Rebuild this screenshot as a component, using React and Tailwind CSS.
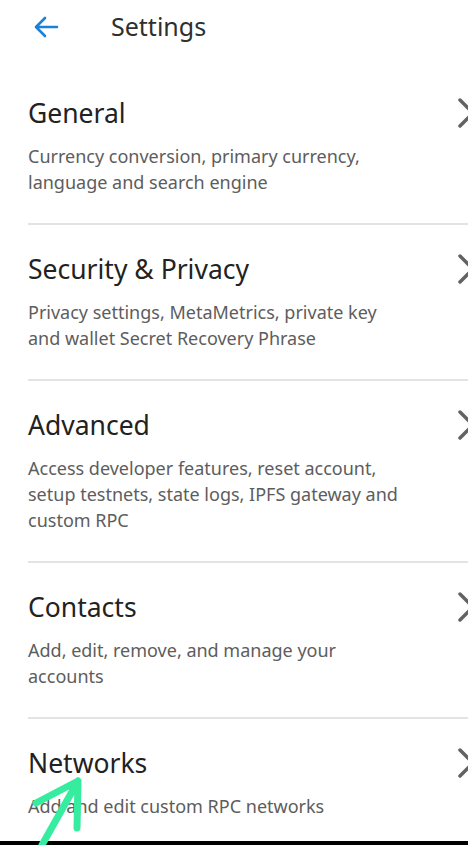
import React from 'react';

const items = [
  { title: 'General', desc: ['Currency conversion, primary currency,', 'language and search engine'] },
  { title: 'Security & Privacy', desc: ['Privacy settings, MetaMetrics, private key', 'and wallet Secret Recovery Phrase'] },
  { title: 'Advanced', desc: ['Access developer features, reset account,', 'setup testnets, state logs, IPFS gateway and', 'custom RPC'] },
  { title: 'Contacts', desc: ['Add, edit, remove, and manage your', 'accounts'] },
  { title: 'Networks', desc: ['Add and edit custom RPC networks'] },
];

function Chevron() {
  return (
    <svg width="20" height="32" viewBox="0 0 20 32" className="shrink-0">
      <path d="M4 3 L17 16 L4 29" fill="none" stroke="#5f6368" strokeWidth="3.5" strokeLinecap="round" strokeLinejoin="round" />
    </svg>
  );
}

export default function App() {
  return (
    <div className="relative w-[468px] h-[845px] overflow-hidden bg-white" style={{ fontFamily: '"Noto Sans", Lato, sans-serif' }}>
      <div className="flex items-center h-[54px] pl-[32px]">
        <svg width="28" height="24" viewBox="0 0 28 24">
          <path d="M25 12 H4 M13 3 L4 12 L13 21" fill="none" stroke="#1a82d6" strokeWidth="2.6" strokeLinecap="round" strokeLinejoin="round" />
        </svg>
        <span className="ml-[51px] text-[25px] text-[#2f2f2f]">Settings</span>
      </div>

      <div className="pl-[28px]">
        {items.map((it, i) => (
          <div key={it.title} className={i > 0 ? 'border-t-2 border-[#e3e3e3]' : ''}>
            <div className={`flex items-start justify-between mr-[-8px] ${i === 0 ? 'pt-[42px]' : 'pt-[27px]'} pb-[27px]`}>
              <div>
                <div className="text-[26.5px] leading-[34px] text-[#222]">{it.title}</div>
                <div className="mt-[13px] text-[18px] leading-[26.4px] text-[#5d5d5d]">
                  {it.desc.map((d) => <div key={d}>{d}</div>)}
                </div>
              </div>
              <div className="pt-[1px]"><Chevron /></div>
            </div>
          </div>
        ))}
      </div>

      <div className="absolute left-0 right-0 bottom-0 h-[4px] bg-black" />

      <svg className="absolute left-0 top-[770px]" width="100" height="75" viewBox="0 770 100 75">
        <path d="M42 845 L78 781 M36 803 L78 781 L77 828" fill="none" stroke="#36ec9e" strokeWidth="7" strokeLinecap="round" strokeLinejoin="round" />
      </svg>
    </div>
  );
}
